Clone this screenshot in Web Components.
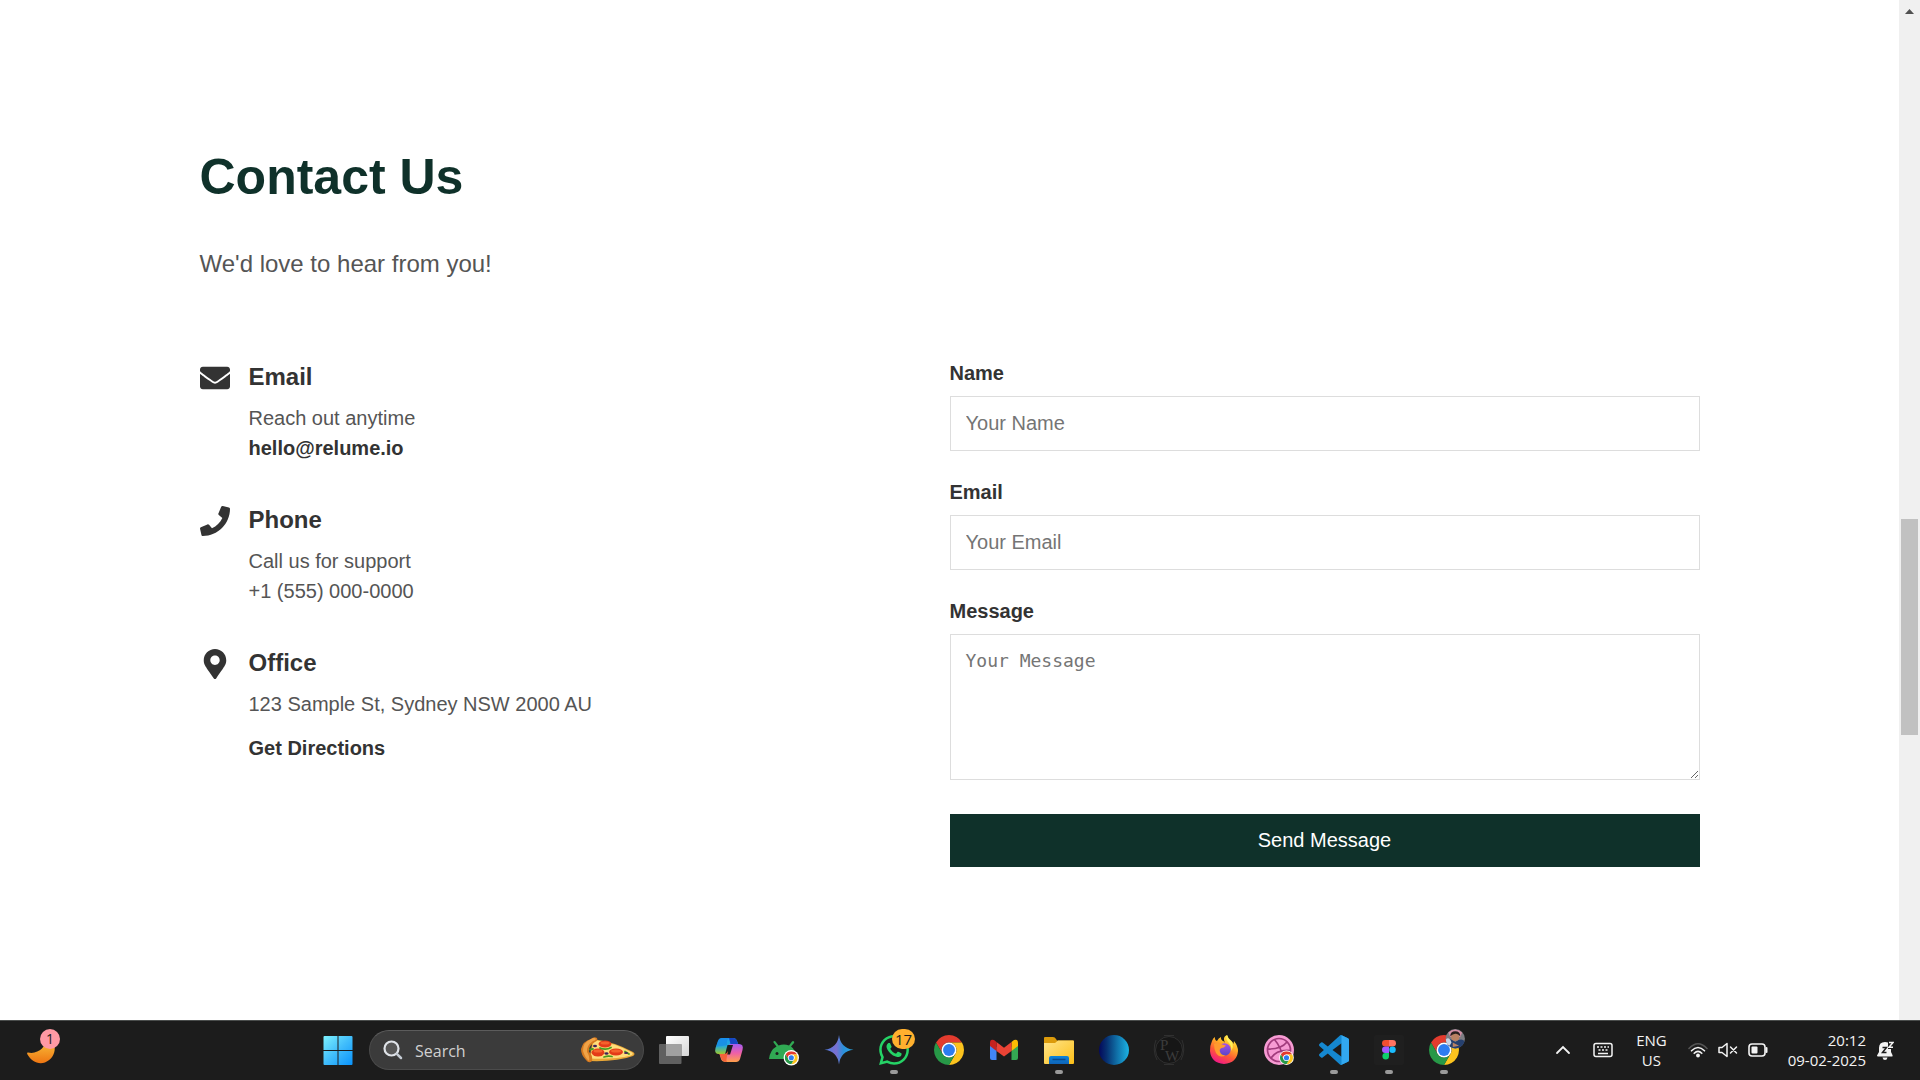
<!DOCTYPE html>
<html lang="en">
<head>
<meta charset="utf-8">
<title>Contact Us</title>
<style>
  html, body { margin: 0; height: 100%; }
  body { font-family: "Liberation Sans", Arial, sans-serif; background: #fff; color: #333; overflow: hidden; }
</style>
</head>
<body>
<desktop-screen>
  <contact-section slot="page">
    <contact-item kind="email" heading="Email">
      <span>Reach out anytime</span>
      <a href="mailto:hello@relume.io">hello@relume.io</a>
    </contact-item>
    <contact-item kind="phone" heading="Phone">
      <span>Call us for support</span>
      <span>+1 (555) 000-0000</span>
    </contact-item>
    <contact-item kind="office" heading="Office">
      <span>123 Sample St, Sydney NSW 2000 AU</span>
      <a href="#directions" class="spaced">Get Directions</a>
    </contact-item>
  </contact-section>
  <scroll-rail slot="rail"></scroll-rail>
  <task-bar slot="taskbar"></task-bar>
</desktop-screen>

<script>
const define = (name, html, setup) => {
  const template = document.createElement('template');
  template.innerHTML = html;
  customElements.define(name, class extends HTMLElement {
    constructor() {
      super();
      this.attachShadow({ mode: 'open' }).append(template.content.cloneNode(true));
    }
    connectedCallback() { if (setup) setup(this, this.shadowRoot); }
  });
};

define('desktop-screen', `
<style>
  :host { display: flex; flex-direction: column; height: 100vh; }
  .view { flex: 1; min-height: 0; display: flex; }
  main { flex: 1; min-width: 0; overflow: hidden; }
</style>
<div class="view"><main><slot name="page"></slot></main><slot name="rail"></slot></div>
<slot name="taskbar"></slot>`);

define('scroll-rail', `
<style>
  :host { display: flex; flex-direction: column; width: 21px; background: #f0f0f0; align-items: center; }
  svg { display: block; width: 21px; height: 21px; }
  .above { flex: 498; }
  .thumb { flex: 216; width: 17px; background: #c1c1c1; }
  .below { flex: 285; }
</style>
<svg viewBox="0 0 21 21" aria-hidden="true"><path d="M6 14 10.500 9 15 14z" fill="#505050"/></svg>
<div class="above"></div><div class="thumb"></div><div class="below"></div>`);

define('contact-section', `
<style>
  :host { display: block; padding: 147px 40px 0; }
  .wrap { max-width: 1500px; margin: 0 auto; }
  h1 { margin: 0; font-size: 50px; line-height: 60px; color: #0f312a; }
  .lead { margin: 42px 0 84px; font-size: 24px; line-height: 30px; color: #555; }
  .columns { display: grid; grid-template-columns: 1fr 1fr; align-items: start; }
  .details { display: flex; flex-direction: column; gap: 43px; }
</style>
<div class="wrap">
  <h1>Contact Us</h1>
  <p class="lead">We'd love to hear from you!</p>
  <div class="columns">
    <div class="details"><slot></slot></div>
    <contact-form></contact-form>
  </div>
</div>`);

const itemIcons = {
  email: ['0 0 512 512', 'M502.3 190.8c3.9-3.1 9.7-.2 9.7 4.7V400c0 26.500-21.500 48-48 48H48c-26.500 0-48-21.500-48-48V195.600c0-5 5.700-7.800 9.700-4.700 22.400 17.400 52.100 39.500 154.100 113.600 21.100 15.400 56.700 47.800 92.200 47.600 35.700.3 72-32.800 92.300-47.600 102-74.100 131.600-96.300 154-113.700zM256 320c23.200.4 56.600-29.200 73.400-41.400 132.700-96.300 142.800-104.700 173.400-128.700 5.800-4.500 9.200-11.500 9.200-18.900v-19c0-26.500-21.500-48-48-48H48c-26.500 0-48 21.500-48 48v19c0 7.400 3.400 14.300 9.200 18.900 30.600 23.900 40.700 32.400 173.400 128.700 16.800 12.200 50.200 41.800 73.400 41.400z'],
  phone: ['0 0 512 512', 'M493.400 24.600l-104-24c-11.300-2.600-22.900 3.300-27.500 13.900l-48 112c-4.200 9.800-1.400 21.300 6.900 28l60.600 49.600c-36 76.700-98.900 140.500-177.200 177.200l-49.600-60.600c-6.800-8.300-18.200-11.100-28-6.900l-112 48C3.900 366.500-2 378.100.6 389.400l24 104C27.100 504.200 36.700 512 48 512c256.100 0 464-207.500 464-464 0-11.200-7.700-20.900-18.600-23.400z'],
  office: ['-64 0 512 512', 'M172.268 501.670C26.970 291.031 0 269.413 0 192 0 85.961 85.961 0 192 0s192 85.961 192 192c0 77.413-26.970 99.031-172.268 309.670-9.535 13.774-29.930 13.773-39.464 0zM192 272c44.183 0 80-35.817 80-80s-35.817-80-80-80-80 35.817-80 80 35.817 80 80 80z']
};

define('contact-item', `
<style>
  :host { display: flex; gap: 19px; }
  svg { width: 30px; height: 30px; flex: none; fill: #333; }
  h2 { margin: 0 0 12px; font-size: 24px; line-height: 28px; color: #333; }
  .lines { display: flex; flex-direction: column; align-items: flex-start; font-size: 20px; line-height: 30px; color: #555; }
  ::slotted(a) { color: #333; font-weight: bold; text-decoration: none; }
  ::slotted(a.spaced) { margin-top: 14px; }
</style>
<svg aria-hidden="true"><path/></svg>
<div><h2></h2><div class="lines"><slot></slot></div></div>`, (host, root) => {
  const [box, d] = itemIcons[host.getAttribute('kind')];
  root.querySelector('svg').setAttribute('viewBox', box);
  root.querySelector('path').setAttribute('d', d);
  root.querySelector('h2').textContent = host.getAttribute('heading');
});

define('form-field', `
<style>
  :host { display: flex; flex-direction: column; gap: 12px; }
  label { font-size: 20px; line-height: 21px; font-weight: bold; color: #333; }
  input, textarea { display: block; box-sizing: border-box; width: 100%; margin: 0; padding: 15px; border: 1px solid #ddd; border-radius: 0; background: #fff; color: #333; font: 20px/23px "Liberation Sans", Arial, sans-serif; outline: none; }
  input { height: 55px; }
  textarea { height: 146px; padding-top: 14px; font: 18px/23px Consolas, "DejaVu Sans Mono", monospace; resize: vertical; }
  ::placeholder { color: #757575; opacity: 1; }
</style>
<label for="control"></label>`, (host, root) => {
  if (root.getElementById('control')) return;
  const type = host.getAttribute('type');
  const control = document.createElement(type === 'multiline' ? 'textarea' : 'input');
  if (type !== 'multiline') control.type = type;
  control.id = 'control';
  control.placeholder = host.getAttribute('placeholder');
  root.querySelector('label').textContent = host.getAttribute('label');
  root.append(control);
});

define('contact-form', `
<style>
  :host { display: block; }
  form { display: flex; flex-direction: column; }
  .fields { display: flex; flex-direction: column; gap: 31px; margin-bottom: 34px; }
  button { height: 53px; border: 0; padding: 0 0 2px; background: #0f312a; color: #fff; font: 20px/24px "Liberation Sans", Arial, sans-serif; cursor: pointer; }
</style>
<form>
  <div class="fields">
    <form-field type="text" label="Name" placeholder="Your Name"></form-field>
    <form-field type="email" label="Email" placeholder="Your Email"></form-field>
    <form-field type="multiline" label="Message" placeholder="Your Message"></form-field>
  </div>
  <button type="button">Send Message</button>
</form>`);

define('task-app', `
<style>
  :host { display: block; position: relative; width: 55px; height: 60px; }
  button { display: flex; align-items: center; justify-content: center; width: 100%; height: 100%; margin: 0; padding: 0; border: 0; background: none; }
  ::slotted(svg) { display: block; width: 30px; height: 30px; overflow: visible; }
  .dot { display: none; position: absolute; left: 50%; bottom: 6px; width: 8px; height: 4px; margin-left: -4px; border-radius: 2px; background: #9a9a9a; }
  :host([running]) .dot { display: block; }
  ::slotted(.badge) { position: absolute; top: 9px; left: 26px; min-width: 23px; height: 20px; border-radius: 10px; background: #ffb02e; color: #1c1c1c; font: 15px/20px "Open Sans", sans-serif; text-align: center; }
</style>
<button type="button"><slot></slot></button><slot name="badge"></slot><span class="dot"></span>`, (host, root) => {
  root.querySelector('button').setAttribute('aria-label', host.getAttribute('name'));
});

// The Chrome mark on a 48-unit grid, reused by the browser, the profile window and web-app badges.
const chrome = `
<path d="M24 12H44.780A24 24 0 0 0 3.220 12L13.600 30A12 12 0 0 1 24 12Z" fill="#e33b2e"/>
<path d="M24 12H44.780A24 24 0 0 0 3.220 12L13.600 30A12 12 0 0 1 24 12Z" fill="#fcc31e" transform="rotate(120 24 24)"/>
<path d="M24 12H44.780A24 24 0 0 0 3.220 12L13.600 30A12 12 0 0 1 24 12Z" fill="#279847" transform="rotate(240 24 24)"/>
<circle cx="24" cy="24" r="12" fill="#fff"/><circle cx="24" cy="24" r="9.500" fill="#2d7cf0"/>`;

define('task-bar', `
<style>
  :host { display: flex; box-sizing: border-box; height: 60px; flex: none; background: #1c1c1c; box-shadow: inset 0 1px #4a4d4c; color: #f3f3f3; font: 15px/20px "Open Sans", "Noto Sans", sans-serif; }
  svg { display: block; }
  .weather { position: relative; flex: 0 0 310px; display: flex; align-items: center; }
  .weather svg { margin-left: 27px; width: 28px; height: 28px; }
  .weather .count { position: absolute; left: 40px; top: 9px; width: 20px; height: 20px; border-radius: 50%; background: #ff99a4; color: #1c1c1c; text-align: center; font-size: 14px; }
  .search { display: flex; align-items: center; box-sizing: border-box; width: 275px; height: 40px; align-self: center; margin: 0 2px 0 4px; padding: 0 8px 0 13px; border: 1px solid #4b4b4b; border-top-color: #5c5c5c; border-radius: 20px; background: #3b3b3b; gap: 12px; }
  .search input { flex: 1; min-width: 0; padding: 2px 0 0; border: 0; background: none; outline: none; color: #fff; font: 16px/24px "Open Sans", sans-serif; }
  .search input::placeholder { color: #d0d0d0; opacity: 1; }
  .search > svg { flex: none; }
  .tray { flex: 1; display: flex; align-items: center; justify-content: flex-end; padding-right: 26px; }
  .tray svg { flex: none; }
  .keyboard { margin-left: 22px; }
  .lang { text-align: center; margin: 0 21px 0 23px; }
  .status { display: flex; gap: 10px; }
  .clock { text-align: right; margin: 0 11px 0 20px; }
  .clock span, .lang span { display: block; }
</style>
<div class="weather">
  <svg viewBox="0 0 28 28" aria-hidden="true"><defs><linearGradient id="moon" x1="0" y1="0" x2="0" y2="1"><stop offset="0" stop-color="#fbd044"/><stop offset="1" stop-color="#ee7512"/></linearGradient></defs>
  <path d="M19 0C21 9 12 19 1 16.500C-.2 16.300 0 17.800.5 18.500C4 25 11 29 18 26.500C27 23 30 13 26 6.500C24 3 22 1 19 0Z" fill="url(#moon)"/></svg>
  <span class="count">1</span>
</div>
<task-app name="Start">
  <svg viewBox="0 0 30 30"><defs><linearGradient id="win" gradientUnits="userSpaceOnUse" x1="1" y1="1" x2="29" y2="30"><stop stop-color="#7cf1ff"/><stop offset=".5" stop-color="#41bdfb"/><stop offset="1" stop-color="#0a93fb"/></linearGradient></defs>
  <path fill="url(#win)" d="M1.500 1H14.500V15H.5V2Q.5 1 1.500 1ZM15.500 1H28.500Q29.500 1 29.500 2V15H15.500ZM.5 16H14.500V30H1.500Q.5 30 .5 29ZM15.500 16H29.500V29Q29.500 30 28.500 30H15.500Z"/></svg>
</task-app>
<label class="search">
  <svg width="20" height="20" viewBox="0 0 20 20" aria-hidden="true"><circle cx="8.500" cy="8.500" r="7" fill="#565656" stroke="#dfe3e8" stroke-width="2.200"/><path d="M13.800 13.800 18 18" stroke="#c5ccd4" stroke-width="2.500" stroke-linecap="round"/></svg>
  <input type="text" placeholder="Search" aria-label="Search">
  <svg width="54" height="26" viewBox="0 0 54 26" aria-hidden="true">
    <path d="M12 2Q34 5 52 15Q55 17 52 19Q36 25 8 24Z" fill="#e9a737"/>
    <path d="M13 3Q34 6 51 15.500Q53 17 50 18.500Q34 22.500 9 21.500Z" fill="#ffdc7a"/>
    <path d="M10 2Q13-1 16 1Q17 4 14 5Q7 9 8 15Q12 18 11 24Q8 27 5 23Q0 18 0 12Q2 4 10 2Z" fill="#d67a20"/>
    <path d="M10 2Q13 0 15 2Q14 4 12 4Q5 9 6 15Q9 19 8 24Q4 21 2 14Q2 5 10 2Z" fill="#f0a347"/>
    <g fill="#e43b18"><ellipse cx="24" cy="7" rx="6.500" ry="3.500"/><ellipse cx="17" cy="15.500" rx="6.500" ry="4"/><ellipse cx="35" cy="15" rx="7" ry="3.500"/></g>
    <g fill="#f4632c"><ellipse cx="24" cy="6" rx="4.500" ry="1.500"/><ellipse cx="17" cy="14" rx="4.500" ry="1.500"/><ellipse cx="35" cy="14" rx="5" ry="1.500"/></g>
    <g stroke="#4b9b20" stroke-width="1.800" fill="none" stroke-linecap="round"><path d="M19 11Q25 13.500 30 10.500M23 20Q27 18.500 31 19.500M44 14.500 48 17M9 12.500 12 12"/></g>
    <g fill="#40225a"><ellipse cx="14" cy="9" rx="2" ry="1.300"/><ellipse cx="25.500" cy="16.500" rx="2" ry="1.200"/><ellipse cx="45" cy="16" rx="2" ry="1.100"/></g>
  </svg>
</label>
<task-app name="Task View">
  <svg viewBox="0 0 30 30"><defs><linearGradient id="tv" x2="1" y2="1"><stop stop-color="#fff"/><stop offset="1" stop-color="#d6d6d6"/></linearGradient></defs>
  <rect x="7" y="1" width="23" height="20" rx="1" fill="url(#tv)"/><rect x="0" y="9" width="22.500" height="20" rx="1" fill="#606060"/><path d="M7 9H22.500V21H7Z" fill="#a0a0a0"/></svg>
</task-app>
<task-app name="Copilot">
  <svg viewBox="0 0 30 30"><defs>
    <linearGradient id="cpA" x1="0" y1="0" x2="0" y2="1"><stop stop-color="#1c9df5"/><stop offset=".4" stop-color="#23a9d9"/><stop offset=".75" stop-color="#8fc540"/><stop offset="1" stop-color="#f5ce10"/></linearGradient>
    <linearGradient id="cpB" x1="0" y1="0" x2="0" y2="1"><stop stop-color="#a35cf2"/><stop offset=".5" stop-color="#ee5fa8"/><stop offset="1" stop-color="#ffa04a"/></linearGradient></defs>
    <path d="M8 3H19Q22 3 23 6L24.500 10H20Q18 10 17 13L14 22Q13 25 10 19H5Q0 19 1.500 13L4 6Q5 3 8 3Z" fill="url(#cpA)"/>
    <path d="M15 3H19Q22 3 23 6L24.500 10H20Q18 10 17 11Z" fill="#1747c4"/>
    <path d="M22 27H12Q8 27 7 24L5.500 19H10Q12 19 13 16L15.500 9H25Q30 9 28.500 15L26 24Q25 27 22 27Z" fill="url(#cpB)"/>
    <path d="M13.500 10H19L16 19.500H11Z" fill="#1c1c1c"/>
    <path d="M5.500 19H11Q12.500 19 14 16L12.500 24Q12 26 13 27Q9 27 7.500 24Z" fill="#f4623a"/>
    <path d="M14 3H8Q5 3 4 6L2 12Q5 11 8 11L13 10Q12 4 16 3Z" fill="#1583e6" opacity=".6"/></svg>
</task-app>
<task-app name="Android Device Manager">
  <svg viewBox="0 0 30 30"><path d="M0 24Q1 15 7.500 11.500L4.500 7.500Q4 6.500 5 6Q6 5.700 6.500 6.500L9.500 10.500Q15 8.500 20 10.500L23 6.500Q24 5.500 25 6.500Q25.500 7 25 8L22 11.500Q26.500 14 26.500 24Z" fill="#30a953"/><circle cx="8" cy="18.500" r="1.500" fill="#1c1c1c"/><circle cx="22.300" cy="22.700" r="7.700" fill="#fff"/><svg x="15.800" y="16.200" width="13" height="13" viewBox="0 0 48 48">${chrome}</svg></svg>
</task-app>
<task-app name="Gemini">
  <svg viewBox="0 0 30 30"><defs><linearGradient id="gem" x1="0" x2="1"><stop stop-color="#4a7bdc"/><stop offset=".4" stop-color="#7b6fd0"/><stop offset=".65" stop-color="#2b8fda"/><stop offset="1" stop-color="#27a9e6"/></linearGradient></defs><path d="M15 0Q16.500 13 29.500 14.800Q16.500 16.500 15 29.500Q13.500 16.500.5 14.800Q13.500 13 15 0Z" fill="url(#gem)"/></svg>
</task-app>
<task-app name="WhatsApp" running>
  <svg viewBox="0 0 24 24"><path fill="#25d366" d="M17.472 14.382c-.297-.149-1.758-.867-2.030-.967-.273-.099-.471-.148-.670.150-.197.297-.767.966-.940 1.164-.173.199-.347.223-.644.075-.297-.150-1.255-.463-2.390-1.475-.883-.788-1.480-1.761-1.653-2.059-.173-.297-.018-.458.130-.606.134-.133.298-.347.446-.520.149-.174.198-.298.298-.497.099-.198.050-.371-.025-.520-.075-.149-.669-1.612-.916-2.207-.242-.579-.487-.500-.669-.510-.173-.008-.371-.010-.570-.010-.198 0-.520.074-.792.372-.272.297-1.040 1.016-1.040 2.479 0 1.462 1.065 2.875 1.213 3.074.149.198 2.096 3.200 5.077 4.487.709.306 1.262.489 1.694.625.712.227 1.360.195 1.871.118.571-.085 1.758-.719 2.006-1.413.248-.694.248-1.289.173-1.413-.074-.124-.272-.198-.570-.347m-5.421 7.403h-.004a9.870 9.870 0 0 1-5.031-1.378l-.361-.214-3.741.982.998-3.648-.235-.374a9.860 9.860 0 0 1-1.510-5.260c.001-5.450 4.436-9.884 9.888-9.884 2.640 0 5.122 1.030 6.988 2.898a9.825 9.825 0 0 1 2.893 6.994c-.003 5.450-4.437 9.884-9.885 9.884m8.413-18.297A11.815 11.815 0 0 0 12.050 0C5.495 0 .160 5.335.157 11.892c0 2.096.547 4.142 1.588 5.945L.057 24l6.305-1.654a11.882 11.882 0 0 0 5.683 1.448h.005c6.554 0 11.890-5.335 11.893-11.893a11.821 11.821 0 0 0-3.480-8.413z"/></svg>
  <span class="badge" slot="badge">17</span>
</task-app>
<task-app name="Google Chrome"><svg viewBox="0 0 48 48">${chrome}</svg></task-app>
<task-app name="Gmail">
  <svg viewBox="0 0 30 30"><path d="M1 8 7.500 12V25H3Q1 25 1 23Z" fill="#4285f4"/><path d="M29 8 22.500 12V25H27Q29 25 29 23Z" fill="#34a853"/><path d="M22.500 7 25 5Q29 3.500 29 8V11L22.500 16Z" fill="#fbbc04"/><path d="M7.500 7 15 12.700 22.500 7V16L15 21.500 7.500 16Z" fill="#ea4335"/><path d="M1 8Q1 3.500 5 5L7.500 7V16L1 11Z" fill="#c5221f"/></svg>
</task-app>
<task-app name="File Explorer" running>
  <svg viewBox="0 0 30 30"><defs><linearGradient id="fold" x2="1" y2="1"><stop stop-color="#ffe48a"/><stop offset="1" stop-color="#fcbf17"/></linearGradient><linearGradient id="tab" x2="0" y2="1"><stop stop-color="#0b84dc"/><stop offset="1" stop-color="#0f64b8"/></linearGradient></defs><path d="M0 3Q0 2 1 2H9Q11 2 12 4L13 5.500H29Q30 5.500 30 6.500V12H0Z" fill="#dc9b0b"/><path d="M0 8H11L14 5.500H29Q30 5.500 30 6.500V28Q30 29 29 29H1Q0 29 0 28Z" fill="url(#fold)"/><path d="M5 29V23Q5 21 7 21H23Q25 21 25 23V29Z" fill="url(#tab)"/><path d="M8.500 24.500H21.500" stroke="#0a4a8e" stroke-width="1.500"/></svg>
</task-app>
<task-app name="Gradient App">
  <svg viewBox="0 0 30 30"><defs><linearGradient id="orb"><stop stop-color="#04085c"/><stop offset=".25" stop-color="#073070"/><stop offset=".6" stop-color="#1070a8"/><stop offset="1" stop-color="#1cb3e4"/></linearGradient></defs><circle cx="15" cy="15" r="15" fill="url(#orb)"/></svg>
</task-app>
<task-app name="Physics Wallah">
  <svg viewBox="0 0 30 30"><circle cx="15" cy="15" r="13.500" fill="#161616" stroke="#303030"/><path d="M2 5Q-2 15 3 25M28 5Q32 15 27 25M10 .5H20M10 29.500H20" stroke="#303030" fill="none"/><text x="6" y="15" font-family="Liberation Serif, serif" font-size="15" fill="#3c3c3c">P</text><text x="11" y="26" font-family="Liberation Serif, serif" font-size="15" fill="#3c3c3c">W</text></svg>
</task-app>
<task-app name="Firefox">
  <svg viewBox="0 0 30 30"><defs><linearGradient id="ff" x1=".8" y1="0" x2=".3" y2="1"><stop stop-color="#fff14a"/><stop offset=".35" stop-color="#ffb125"/><stop offset=".65" stop-color="#ff5a35"/><stop offset="1" stop-color="#f0148c"/></linearGradient><linearGradient id="ffp" x2="0" y2="1"><stop stop-color="#a650e8"/><stop offset="1" stop-color="#5a45c8"/></linearGradient></defs>
  <path d="M3 6Q4 3 6 2Q5.500 5 8 6Q9.500 3 12 2Q11.500 5 15 6.500L16 8Q13 2 18 0Q19 4 22 5.500Q24 7 24.500 9L25 6Q29 11 29 16Q28 28 15 29Q2 28 1 16Q1 10 3 6Z" fill="url(#ff)"/><circle cx="15.500" cy="14.500" r="6.200" fill="url(#ffp)"/><path d="M5 9Q9 7 12 9Q15 10 17 10.500Q15 13 12.500 13Q10 14 11 17Q13 21 17 20Q11 24 7 18Q5 14 5 9Z" fill="#ff9a2e"/><path d="M18 0Q16 4 20 8Q23 11 22 16Q25 12 23 7Q19 4 18 0Z" fill="#fff05a"/></svg>
</task-app>
<task-app name="Dribbble">
  <svg viewBox="0 0 30 30"><circle cx="15" cy="15" r="15" fill="#f79bd3"/><g stroke="#a13c7c" stroke-width="1.700" fill="none"><circle cx="15" cy="15" r="11.500"/><path d="M10.500 4.500Q17 12 20 25M3.500 14Q17 14.500 23 7M7 23Q13 14 26.500 15.500"/></g><circle cx="22.500" cy="22.700" r="7.300" fill="#fff"/><svg x="16" y="16.200" width="13" height="13" viewBox="0 0 48 48">${chrome}</svg></svg>
</task-app>
<task-app name="Visual Studio Code" running>
  <svg viewBox="0 0 24 24"><path fill="#1588d0" d="M23.150 2.587L18.210.210a1.494 1.494 0 0 0-1.705.290l-9.460 8.630-4.120-3.128a.999.999 0 0 0-1.276.057L.327 7.261A1 1 0 0 0 .326 8.740L3.899 12 .326 15.260a1 1 0 0 0 .001 1.479L1.650 17.940a.999.999 0 0 0 1.276.057l4.120-3.128 9.460 8.630a1.492 1.492 0 0 0 1.704.290l4.942-2.377A1.500 1.500 0 0 0 24 20.060V3.939a1.500 1.500 0 0 0-.850-1.352zm-5.146 14.861L10.826 12l7.178-5.448v10.896z"/><path d="M18 .2 23.150 2.600Q24 3 24 3.900V20.100Q24 21 23.150 21.400L17.500 23.900Q18 23.500 18 22.500Z" fill="#32a8f0"/></svg>
</task-app>
<task-app name="Figma" running>
  <svg viewBox="0 0 30 30"><rect width="30" height="30" rx="2" fill="#1f1f1f"/><path d="M11.300 5H15V11.500H11.300A3.250 3.250 0 0 1 11.300 5Z" fill="#f24e2e"/><path d="M15 5H18.700A3.250 3.250 0 0 1 18.700 11.500H15Z" fill="#ff7262"/><path d="M11.300 11.500H15V18H11.300A3.250 3.250 0 0 1 11.300 11.500Z" fill="#a259ff"/><circle cx="18.500" cy="14.800" r="3.250" fill="#1abcfe"/><path d="M11.300 18H15V21.300A3.300 3.300 0 1 1 11.300 18Z" fill="#0fcf6b"/></svg>
</task-app>
<task-app name="Chrome profile" running>
  <svg viewBox="0 0 48 48">${chrome}<g><circle cx="42" cy="6" r="15.500" fill="#7d7d83"/><path d="M31-4Q42-14 53-4L50 3H34Z" fill="#d48fa6"/><path d="M27 10Q34 3 42 11Q52 4 57 10Q54 21 42 21.500Q31 21 27 10Z" fill="#26406e"/><path d="M27 7Q32 2 36 12L33 17Q27 14 27 7Z" fill="#c9d3e3"/><circle cx="42" cy="3" r="6.500" fill="#b98263"/><path d="M34 2Q34-6 42-6Q50-6 50 2Q46-3 42-2Q38-2 34 2Z" fill="#29201f"/><path d="M38 12 48 17 38 19Z" fill="#b98263"/></g></svg>
</task-app>
<div class="tray">
  <svg width="16" height="20" viewBox="0 0 16 20" aria-hidden="true"><path d="M2 13 8 7 14 13" fill="none" stroke="#f3f3f3" stroke-width="1.800" stroke-linecap="round"/></svg>
  <svg class="keyboard" width="20" height="16" viewBox="0 0 20 16" aria-hidden="true"><rect x="1" y="1.500" width="18" height="13" rx="2" fill="none" stroke="#f3f3f3" stroke-width="1.500"/><path d="M4 5H6M7.500 5H9.500M11 5H13M14.500 5H16M5.500 8H7.500M9 8H11M12.500 8H14.500M5 11.500H15" stroke="#f3f3f3" stroke-width="1.500"/></svg>
  <div class="lang"><span>ENG</span><span>US</span></div>
  <div class="status">
    <svg width="20" height="20" viewBox="0 0 20 20" aria-hidden="true"><g fill="none" stroke-linecap="round" stroke-width="1.600"><path d="M1 8.500Q10-1 19 8.500" stroke="#555"/><path d="M3.500 10.800Q10 4.200 16.500 10.800M6.200 13.300Q10 9.400 13.800 13.300" stroke="#f3f3f3"/></g><circle cx="10" cy="15.500" r="1.900" fill="#f3f3f3"/></svg>
    <svg width="20" height="20" viewBox="0 0 20 20" aria-hidden="true"><path d="M1 7.500H4L9 3.500V16.500L4 12.500H1ZM12.500 7 18.500 13M18.500 7 12.500 13" fill="none" stroke="#f3f3f3" stroke-width="1.500" stroke-linejoin="round" stroke-linecap="round"/></svg>
    <svg width="20" height="20" viewBox="0 0 20 20" aria-hidden="true"><rect x="1" y="4" width="16" height="12" rx="3" fill="none" stroke="#f3f3f3" stroke-width="1.600"/><rect x="3.500" y="6.500" width="6" height="7" rx="1" fill="#f3f3f3"/><path d="M18.500 8V12" stroke="#f3f3f3" stroke-width="2" stroke-linecap="round"/></svg>
  </div>
  <div class="clock"><span>20:12</span><span>09-02-2025</span></div>
  <svg width="17" height="20" viewBox="0 0 17 20" aria-hidden="true"><path d="M8 2Q2 2 2 8V12L0 15.500Q0 16.500 1 16.500H15Q16 16.500 15.500 15L14 12V9H11V2.500ZM5.500 17.500H10.500Q10 20 8 20T5.500 17.500Z" fill="#f3f3f3"/><path d="M5.500 7.500H9.500L5.500 12.500H9.500" fill="none" stroke="#1c1c1c" stroke-width="1.500"/><path d="M12 2.500H16L12 7.200H16" fill="none" stroke="#f3f3f3" stroke-width="1.500"/></svg>
</div>`);
</script>
</body>
</html>
